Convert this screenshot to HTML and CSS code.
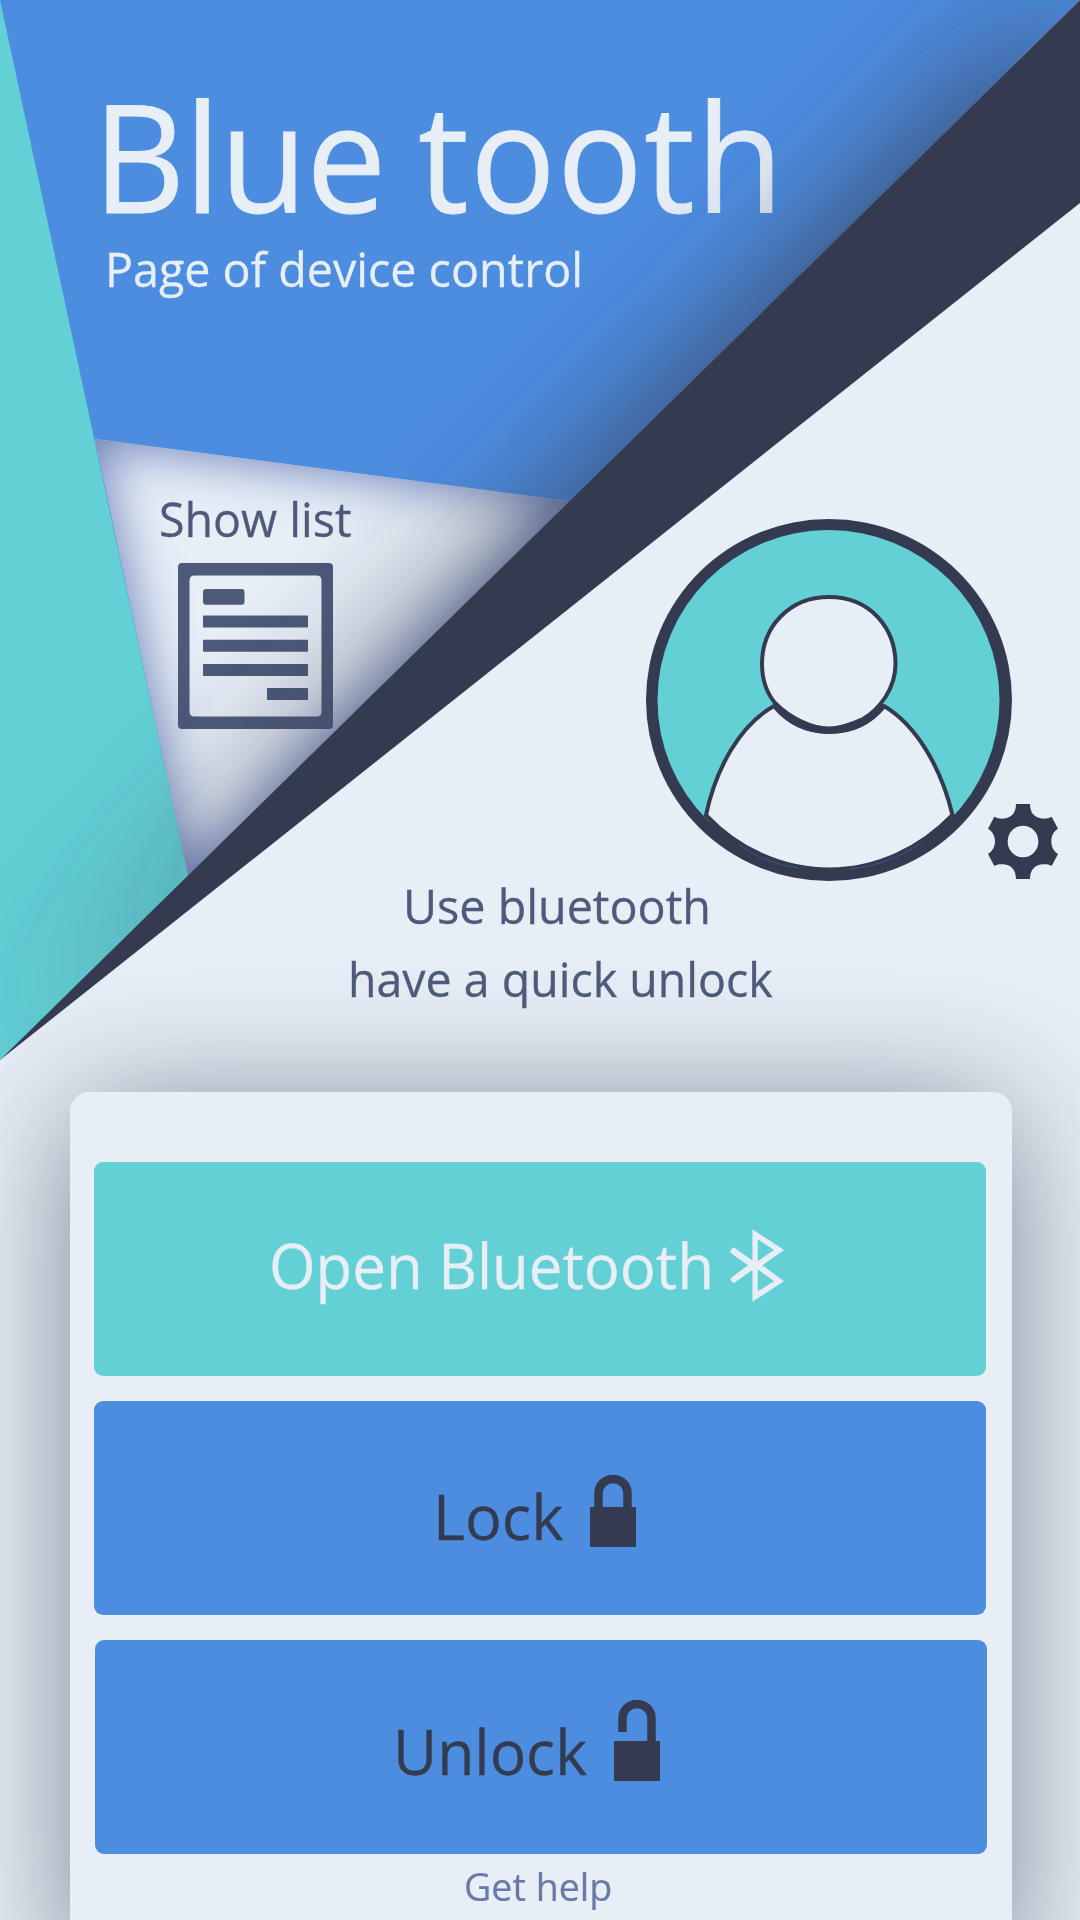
FILE: index.html
```html
<!DOCTYPE html>
<html lang="en">
<head>
<meta charset="utf-8">
<title>Blue tooth</title>
<link rel="stylesheet" href="styles.css">
</head>
<body>
<div class="screen">
  <section class="hero">
    <svg class="backdrop" viewBox="0 0 1080 1092" aria-hidden="true">
      <defs>
        <filter id="soft" x="-30%" y="-30%" width="160%" height="160%"><feGaussianBlur stdDeviation="70"/></filter>
        <filter id="inner" x="-30%" y="-30%" width="160%" height="160%"><feGaussianBlur stdDeviation="27"/></filter>
        <clipPath id="upper"><path d="M0 0H1080L0 1060Z"/></clipPath>
        <clipPath id="facet"><path d="M95 439L569 501L188 876Z"/></clipPath>
      </defs>
      <path class="fill-blue" d="M0 0H1080L569 502L188 877L0 1060Z"/>
      <path class="fill-light" d="M95 439L569 501L188 876Z"/>
      <g clip-path="url(#facet)">
        <path class="inner-shade" fill-rule="evenodd" filter="url(#inner)" d="M-100 300H800V1050H-100ZM95 439L188 876L569 501Z"/>
      </g>
      <path class="fill-teal" d="M0 0L188 876L0 1060Z"/>
    </svg>
    <header class="heading">
      <h1 class="title"><span class="tight">Blue</span> <span class="loose">tooth</span></h1>
      <p class="subtitle">Page of device control</p>
    </header>
    <div class="middle">
      <div class="list-link">
        <span class="list-label">Show list</span>
        <svg class="list-icon" viewBox="178 563 155 166">
          <path fill-rule="evenodd" d="M182 563H329Q333 563 333 567V725Q333 729 329 729H182Q178 729 178 725V567Q178 563 182 563ZM194.500 575.600Q189.500 575.600 189.500 580.600V711.600Q189.500 716.600 194.500 716.600H316.500Q321.500 716.600 321.500 711.600V580.600Q321.500 575.600 316.500 575.600Z"/>
          <rect x="203" y="589" width="41.500" height="15.800" rx="3"/>
          <rect x="203" y="615.500" width="105" height="12" rx=".8"/>
          <rect x="203" y="639.800" width="105" height="12" rx=".8"/>
          <rect x="203" y="664" width="105" height="12" rx=".8"/>
          <rect x="267" y="688" width="41" height="12" rx=".8"/>
        </svg>
      </div>
      <svg class="profile" viewBox="620 490 460 420">
        <ellipse class="fill-dark" cx="829" cy="700" rx="183" ry="181"/>
        <ellipse class="fill-teal" cx="828.500" cy="700" rx="171" ry="170"/>
        <path class="fill-dark" d="M703 815L954 816C925 850 880 874 829 874C778 874 733 850 703 815Z"/>
        <path class="body" d="M706 815C716 768 740 725 774 706C789 724 808 732 829 732C851 732 870 724 884 706C916 725 941 767 952.500 815C921 848 877 869.500 829 869.500C781 869.500 737 848 706 815Z"/>
        <path class="crescent" d="M775 705C790 723 809 730.500 829 730.500C850 730.500 869 723 884 705"/>
        <path class="body" d="M829 597C871 597 895.500 629 895.500 664C895.500 688 880 709 863 719C852 724 839 728.500 829 728.500C811 728.500 790 718 775 703C766 692 762 679 762 664C762 626 790 597 829 597Z"/>
        <path class="glint" d="M739 845C757 858 778 865 799 868M850 869C873 867 900 858 921 843"/>
        <g transform="translate(960 780) scale(.333333)">
          <path class="fill-dark" fill-rule="evenodd" d="M168 72H210C210 100 225 115 251 116C260 116 269 114 275 110L294 146C280 154 274 169 274 184C274 199 280 214 294 222L275 258C269 254 260 252 251 253C225 254 210 269 210 297H168C168 269 153 254 127 253C118 252 109 254 103 258L84 222C98 214 105 199 105 184C105 169 98 154 84 146L103 110C109 114 118 116 127 116C153 115 168 100 168 72ZM189 137A46 47.500 0 1 0 189 232A46 47.500 0 1 0 189 137Z"/>
        </g>
      </svg>
    </div>
    <div class="caption">
      <p class="caption-a">Use bluetooth</p>
      <p class="caption-b">have a quick unlock</p>
    </div>
    <svg class="ribbon" viewBox="0 0 1080 1092" aria-hidden="true">
      <g clip-path="url(#upper)">
        <path class="cast-shade" filter="url(#soft)" d="M1080 0L0 1060L1080 240Z"/>
      </g>
      <path class="fill-dark" d="M1080 0L0 1060L1080 203Z"/>
    </svg>
  </section>
  <main class="card">
    <div class="button open">
      <span class="label">Open Bluetooth</span>
      <svg class="icon bt" viewBox="730 1229 54 73">
        <path fill-rule="evenodd" d="M752.400 1229.300L784 1250L762.400 1265.200L784 1281.300L752.400 1301.700V1270L733.700 1283.300Q730.500 1281.500 730.300 1278.500L748 1265.200L730.300 1252.700Q730.500 1249 733.700 1247.300L752.400 1260.500ZM757.800 1239.300V1261.300L774 1250ZM757.800 1269.300V1291.300L774 1281.300Z"/>
      </svg>
    </div>
    <div class="button lock">
      <span class="label">Lock</span>
      <svg class="icon" viewBox="0 0 46 72">
        <rect y="32" width="46" height="40" rx="1"/>
        <path class="shackle" d="M8.500 34V18A14.500 14 0 0 1 37.500 18V34"/>
      </svg>
    </div>
    <div class="button unlock">
      <span class="label">Unlock</span>
      <svg class="icon tall" viewBox="0 0 46 81">
        <rect y="41" width="46" height="40" rx="1"/>
        <path class="shackle" d="M8.500 32V18A14.500 14 0 0 1 37.500 18V44"/>
      </svg>
    </div>
    <p class="help">Get help</p>
  </main>
</div>
</body>
</html>
```
FILE: styles.css
```css
* { box-sizing: border-box; }
body { margin: 0; font-family: "Open Sans", "Noto Sans", sans-serif; background: #e7eef6; }
h1, p { margin: 0; font-weight: 400; }
svg { display: block; flex: none; }

.screen { width: 1080px; height: 1920px; overflow: hidden; background: #e7eef6; }
.fill-teal { fill: #63d0d6; }
.fill-blue { fill: #4d8de0; }
.fill-light { fill: #e7eef6; }
.fill-dark { fill: #343b50; }
.inner-shade { fill: #6478b4; opacity: 1; }
.cast-shade { fill: #343b50; opacity: .92; }

.hero { position: relative; z-index: 1; height: 1092px; display: flex; flex-direction: column; }
.backdrop, .ribbon { position: absolute; left: 0; top: 0; width: 1080px; height: 1092px; }
.backdrop { z-index: -1; }

.heading { height: 489px; padding: 80px 0 0 93px; color: #e7eef6; }
.title { font-size: 150px; line-height: 150px; white-space: nowrap; word-spacing: -5px; -webkit-text-stroke: .8px #e7eef6; transform: scaleX(.951); transform-origin: left; }
.tight { letter-spacing: -.8px; }
.loose { letter-spacing: 1.2px; }
.subtitle { margin: 9px 0 0 12px; font-size: 47.5px; line-height: 60px; -webkit-text-stroke: .3px #e7eef6; transform: scaleX(.981); transform-origin: left; }

.middle { display: flex; height: 421px; }
.list-link { width: 620px; padding-left: 159px; color: #4d5a7a; }
.list-label { display: block; font-size: 47.5px; line-height: 60px; -webkit-text-stroke: .3px #4d5a7a; transform: scaleX(.98); transform-origin: left; }
.list-icon { width: 155px; height: 166px; margin: 14px 0 0 19px; fill: #4d5a7a; }
.profile { width: 460px; height: 420px; margin-top: 1px; }
.body { fill: #e7eef6; stroke: #343b50; stroke-width: 4; stroke-linejoin: round; }
.crescent { fill: none; stroke: #343b50; stroke-width: 6; }
.glint { fill: none; stroke: #3f5f94; stroke-width: .7; }

.caption { margin-top: -41px; padding-left: 350px; font-size: 47.5px; line-height: 73px; color: #4d5a7a; -webkit-text-stroke: .3px #4d5a7a; }
.caption p { transform-origin: left; white-space: nowrap; }
.caption-a { margin-left: 53px; transform: scaleX(.983); }
.caption-b { margin-left: -2px; transform: scaleX(.979); }

.card { width: 942px; height: 880px; margin-left: 70px; padding: 70px 0 0 24px; display: flex; flex-direction: column; gap: 25px; border-radius: 19px; background: #e7eef6; box-shadow: 0 14px 135px -6px rgba(52, 59, 80, .64); }
.button { display: flex; align-items: flex-start; flex: none; width: 892px; height: 214px; border-radius: 9px; background: #4d8de0; color: #343b50; fill: #343b50; }
.label { flex: none; font-size: 63px; line-height: 80px; white-space: nowrap; -webkit-text-stroke: .3px currentColor; transform-origin: left; }
.icon { width: 46px; height: 72px; }
.shackle { fill: none; stroke: #343b50; stroke-width: 8.5; }

.open { padding: 63px 0 0 175px; background: #63d0d6; color: #e7eef6; fill: #e7eef6; }
.open .label { width: 461px; transform: scaleX(.951); }
.bt { width: 54px; height: 73px; margin-top: 4px; }
.lock { padding: 74px 0 0 338.5px; }
.lock .label { width: 157.5px; margin-top: 1px; transform: scaleX(.973); }
.unlock { margin-left: 1px; padding: 60px 0 0 297.5px; }
.unlock .label { width: 221.5px; margin-top: 11px; transform: scaleX(.962); }
.tall { height: 81px; }
.help { margin: -18px 0 0 370px; font-size: 38px; line-height: 50px; color: #6a7aa8; -webkit-text-stroke: .2px #6a7aa8; transform: scaleX(.99); transform-origin: left; }
```
